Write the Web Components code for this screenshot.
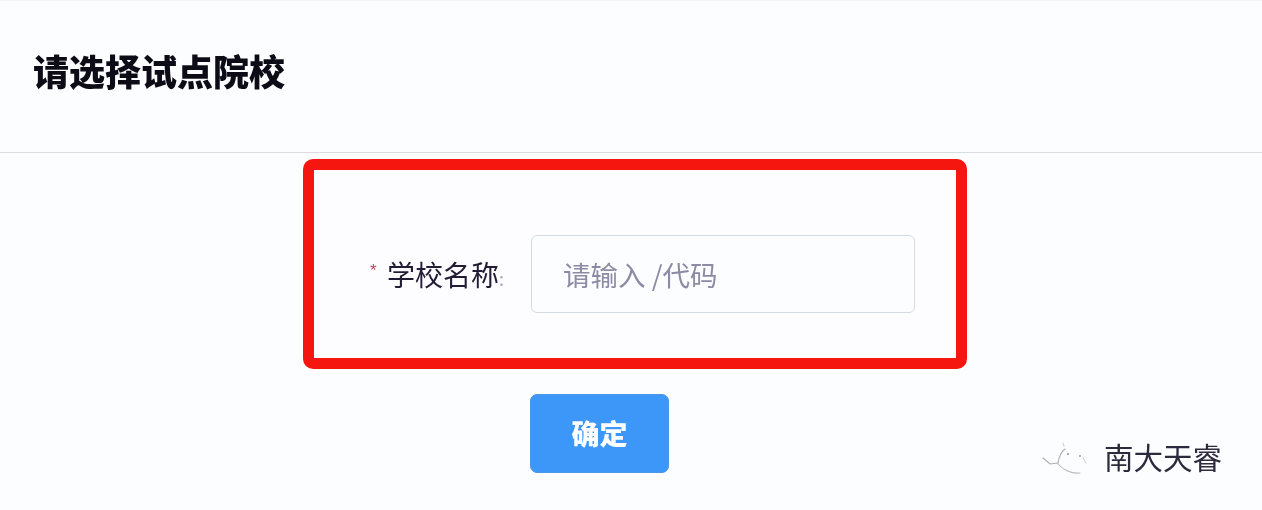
<!DOCTYPE html>
<html lang="zh-CN"><head><meta charset="utf-8"><title>请选择试点院校</title>
<style>
html,body{margin:0;padding:0;height:100%;overflow:hidden}
body{background:#fcfdff;font-family:"Noto Sans CJK SC","Liberation Sans",sans-serif;color:#1c1a2b}
</style></head><body>
<school-page>
<page-header slot="header">请选择试点院校</page-header>
<form-highlight slot="form">
  <form-field label="学校名称" placeholder="请输入 /代码"></form-field>
</form-highlight>
<primary-button slot="action">确定</primary-button>
<wx-watermark slot="mark">南大天睿</wx-watermark>
</school-page>
<script>
function def(name, html){
  customElements.define(name, class extends HTMLElement{
    constructor(){super();this.attachShadow({mode:'open'}).innerHTML=html;}
    connectedCallback(){
      this.shadowRoot.querySelectorAll('[data-attr]').forEach(e=>{e.textContent=this.getAttribute(e.dataset.attr)||''});
    }
  });
}
def('school-page',`<style>
:host{display:flex;flex-direction:column;position:relative;width:1262px;height:510px;overflow:hidden;background:#fcfdff}
.form{display:block;padding:6px 0 0 303px}
.act{display:block;padding:25px 0 0 530px}
</style>
<slot name="header"></slot>
<div class="form"><slot name="form"></slot></div>
<div class="act"><slot name="action"></slot></div>
<slot name="mark"></slot>`);
def('page-header',`<style>
:host{display:flex;align-items:center;box-sizing:border-box;height:153px;padding:0 0 14px 33px;border-top:1px solid #f3f4f6;border-bottom:1px solid #d9dce1;background:#fcfdff;
font-size:36px;font-weight:900;color:#0d0b16;filter:blur(.45px)}
</style><slot></slot>`);
def('form-highlight',`<style>
:host{display:flex;align-items:center;box-sizing:border-box;width:664px;height:210px;border:11px solid #f5170f;border-radius:10px;background:#fdfdff;padding:20px 41px 0 56px;filter:blur(.3px)}
</style><slot></slot>`);
def('form-field',`<style>
:host{display:flex;align-items:center;width:100%;height:78px}
.star{color:#b5465c;font-size:17px;width:17px;flex:none;line-height:1;padding-bottom:8px;font-family:"Liberation Sans",sans-serif}
.label{width:144px;flex:none;display:flex;align-items:baseline;font-size:28px;color:#231c35;white-space:nowrap;filter:blur(.3px)}
.colon{font-size:18px;color:#aaa8b8}
.input{flex:1;box-sizing:border-box;height:78px;display:flex;align-items:center;padding:0 31px;border:1px solid #d5dae2;border-radius:6px;background:#fcfdff;font-size:27.5px;color:#8d8aa5;white-space:pre;filter:blur(.25px)}
</style><span class="star">*</span><span class="label"><span data-attr="label"></span><span class="colon">:</span></span><div class="input" data-attr="placeholder"></div>`);
def('primary-button',`<style>
:host{display:flex;align-items:center;justify-content:center;box-sizing:border-box;width:139px;height:79px;padding-bottom:2px;background:#3c97f8;border:1px solid #4a97e8;border-radius:7px;color:#fff;font-size:28px;font-weight:900;filter:blur(.4px)}
</style><slot></slot>`);
def('wx-watermark',`<style>
:host{position:absolute;left:1040px;top:432px;display:flex;align-items:center;gap:14px;font-size:29.5px;color:#2e2a3d;line-height:48px;filter:blur(.35px)}
svg{display:block;flex:none}
</style>
<svg width="50" height="46" viewBox="0 0 50 46" fill="none" stroke="#a9adb4" stroke-width="1.1" stroke-linecap="round">
<path d="M3 25 L10 31 L18 30"/>
<path d="M18 30 C19 23 21 19 25 16"/>
<path d="M18 31 C23 37 32 41 40 40" stroke="#b9bdc3"/>
<path d="M23 10 L24 13" stroke="#d0d3d8"/>
<circle cx="28" cy="21" r="1" fill="#8b9098" stroke="none"/><circle cx="40" cy="23" r="1" fill="#a0a4ab" stroke="none"/>
<path d="M43 25 L46 30" stroke="#d0d3d8"/>
</svg><slot></slot>`);
</script>
</body></html>
